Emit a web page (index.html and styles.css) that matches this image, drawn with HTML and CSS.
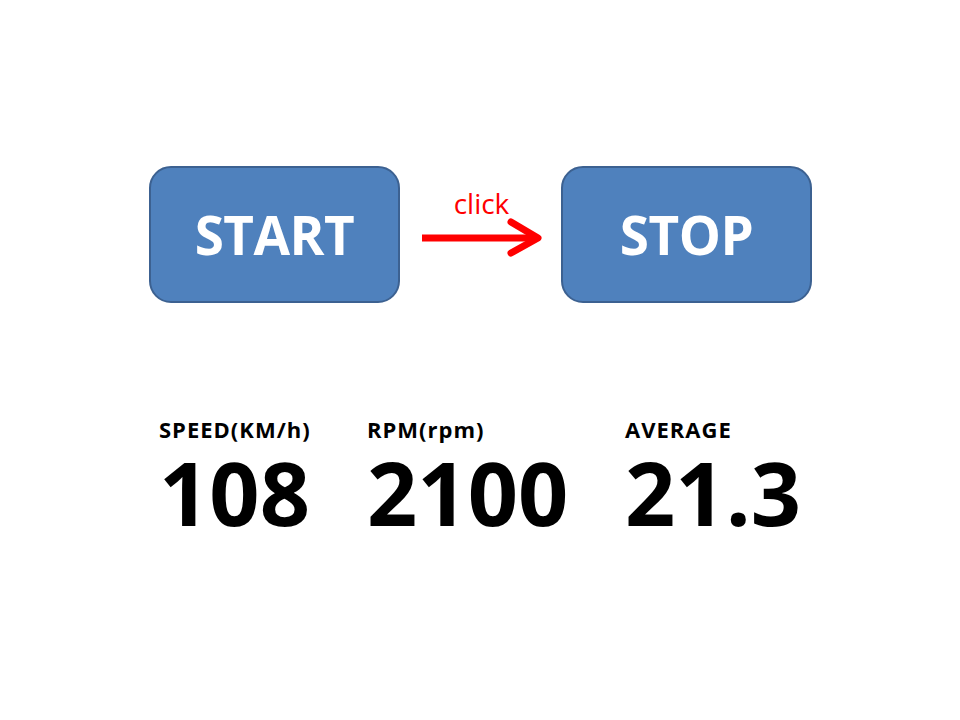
FILE: index.html
```html
<!DOCTYPE html>
<html>
<head>
<meta charset="utf-8">
<link rel="stylesheet" href="styles.css">
</head>
<body>
<div class="page">
  <div class="controls">
    <div class="btn">START</div>
    <div class="link">
      <span class="click">click</span>
      <svg class="arrow" width="161" height="40" viewBox="0 0 161 40">
        <line x1="22" y1="20" x2="138" y2="20" stroke="#ff0000" stroke-width="7"/>
        <polyline points="111,4 138,20 111,35" fill="none" stroke="#ff0000" stroke-width="7" stroke-linecap="round" stroke-linejoin="round"/>
      </svg>
    </div>
    <div class="btn">STOP</div>
  </div>
  <div class="stats">
    <div class="stat s1">
      <div class="label">SPEED(KM/h)</div>
      <div class="value">108</div>
    </div>
    <div class="stat s2">
      <div class="label">RPM(rpm)</div>
      <div class="value">2100</div>
    </div>
    <div class="stat s3">
      <div class="label">AVERAGE</div>
      <div class="value">21.3</div>
    </div>
  </div>
</div>
</body>
</html>
```
FILE: styles.css
```css
html, body {
  margin: 0;
  padding: 0;
  background: #ffffff;
}
.page {
  width: 960px;
  height: 720px;
  font-family: "Open Sans", "Noto Sans CJK KR", sans-serif;
  display: flex;
  flex-direction: column;
}
.controls {
  display: flex;
  align-items: center;
  padding: 166px 0 0 149px;
}
.btn {
  box-sizing: border-box;
  width: 251px;
  height: 137px;
  background: #4f81bd;
  border: 2px solid #3c6191;
  border-radius: 22px;
  color: #ffffff;
  font-weight: 700;
  font-size: 53px;
  letter-spacing: -0.5px;
  display: flex;
  align-items: center;
  justify-content: center;
}
.link {
  width: 161px;
  display: flex;
  flex-direction: column;
  align-items: center;
  margin-bottom: 27px;
}
.click {
  color: #ff0000;
  font-size: 28px;
  line-height: 36px;
  margin-left: 2px;
  margin-bottom: -3px;
}
.arrow {
  display: block;
}
.stats {
  display: flex;
  padding: 113px 0 0 159px;
}
.stat {
  display: flex;
  flex-direction: column;
}
.s1 { width: 208px; }
.s2 { width: 258px; }
.label {
  font-weight: 700;
  font-size: 22px;
  letter-spacing: 1px;
  line-height: 26px;
  color: #000;
}
.value {
  font-weight: 700;
  font-size: 88px;
  line-height: 100px;
  color: #000;
  letter-spacing: 0;
}
```
